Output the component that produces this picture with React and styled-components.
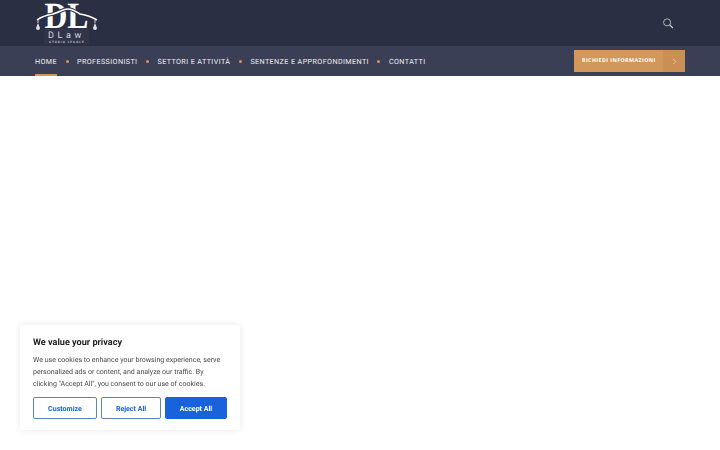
import React from "react";
import styled, { createGlobalStyle } from "styled-components";

const Global = createGlobalStyle`
  html, body { margin: 0; padding: 0; background: #fff; height: 100%; overflow: hidden; }
  body { font-family: Roboto, "Liberation Sans", sans-serif; text-rendering: geometricPrecision; }
`;
const Top = styled.header`
  height: 46px; background: #2b2f44; display: flex; align-items: flex-start;
  justify-content: space-between; padding: 0 47px 0 35px;
`;
const Logo = styled.a`
  display: block; width: 64px; height: 46px; color: #fff;
`;
const LogoArt = styled.svg`display: block; width: 64px; height: 46px;`;
const SearchBtn = styled.button`
  margin-top: 17px; width: 10.5px; height: 11px; padding: 0; border: 0; background: none; color: #d5d7de; display: block;
`;
const Nav = styled.nav`
  height: 30px; background: #3a3f55; display: flex; align-items: stretch;
  justify-content: space-between; padding: 0 35px;
`;
const Menu = styled.ul`
  list-style: none; margin: 0; padding: 0; display: flex; align-items: stretch;
`;
const Item = styled.li`
  display: flex; align-items: center;
  & + &::before {
    content: ""; width: 3px; height: 3px; border-radius: 50%; background: #d2975a; margin: 0 8.5px;
  }
`;
const MenuLink = styled.a`
  position: relative; height: 30px; line-height: 31px; font-size: 7.2px; font-weight: 400; letter-spacing: 0.39px;
  color: #eef0f4; white-space: nowrap; display: block;
  ${p => p.$active && `
    &::after { content: ""; position: absolute; left: 0; right: 0; bottom: 0; height: 2px; background: #d2975a; }
  `}
`;
const Cta = styled.a`
  align-self: center; display: flex; width: 111px; height: 22px; background: #d2975a; color: #fff;
`;
const CtaLabel = styled.span`
  flex: 1; padding-left: 8px; font: 700 5.3px/21px "Open Sans", Roboto, sans-serif; letter-spacing: 0.42px; white-space: nowrap;
`;
const CtaArrow = styled.span`
  width: 22px; background: #c98f54; display: flex; align-items: center; justify-content: center;
`;
const Consent = styled.section`
  position: fixed; left: 20px; top: 325px; width: 220px; height: 105px; box-sizing: border-box;
  padding: 11.5px 13px 0; background: #fff; border-radius: 3px; box-shadow: 0 0 7px rgba(0,0,0,.1);
`;
const Title = styled.h2`
  margin: 0 0 5.5px; font-size: 9.1px; line-height: 12px; font-weight: 700; color: #212121;
`;
const Body = styled.p`
  margin: 0 0 7px; font-size: 7.05px; line-height: 12px; color: #4a4a4a; white-space: nowrap;
`;
const Buttons = styled.div`display: grid; grid-template-columns: 64px 60px 62px; gap: 4px;`;
const Btn = styled.button`
  height: 22px; box-sizing: border-box; padding: 0; border-radius: 2px; font: 700 7.05px Roboto, sans-serif;
  text-rendering: geometricPrecision;
  border: 1px solid #1863dc; color: ${p => (p.$primary ? "#fff" : "#1863dc")}; background: ${p => (p.$primary ? "#1863dc" : "#fff")};
  ${p => !p.$primary && "border-color: #5f84ad;"}
`;

export default function App() {
  return (
    <>
      <Global />
      <Top>
        <Logo aria-label="DLaw">
          <LogoArt viewBox="0 0 64 46">
            <text x="9.5" y="28" fontFamily="Liberation Serif" fontWeight="700" fontSize="37" fill="#fff" textLength="44" lengthAdjust="spacingAndGlyphs">DL</text>
            <path d="M2 21 C6 17 12 15 18 14 C25 12 28 9 33 9 C38 9 41 12 45 14 C51 15 57 17 62 21" fill="none" stroke="#2b2f44" strokeWidth="3.6" />
            <path d="M2 20 C6 17 12 15 18 14 C25 12 28 9 33 9 C38 9 41 12 45 14 C51 15 57 17 62 20" fill="none" stroke="#fff" strokeWidth="1.5" />
            <path d="M3 20v3M60 20v3" stroke="#fff" strokeWidth=".8" />
            <path d="M1 28l2-5 2 5a2 2 0 0 1-4 0zM58 28l2-5 2 5a2 2 0 0 1-4 0z" fill="#dfe0e5" />
            <rect x="9" y="29" width="45" height="15" fill="#34384c" opacity=".75" />
            <text x="13" y="38" fontFamily="Roboto" fontSize="9" fill="#d8dae0" letterSpacing="3.6">DLaw</text>
            <text x="14" y="43" fontFamily="Roboto" fontWeight="700" fontSize="3" fill="#c9cbd3" letterSpacing="1.05">STUDIO LEGALE</text>
          </LogoArt>
        </Logo>
        <SearchBtn aria-label="Cerca">
          <svg width="10.5" height="11" viewBox="0 0 11 11" fill="none" stroke="currentColor">
            <circle cx="4.3" cy="4.3" r="3.7" strokeWidth=".8" />
            <path d="M7 7L10.4 10.4" strokeWidth="1.3" />
          </svg>
        </SearchBtn>
      </Top>
      <Nav>
        <Menu>
          <Item><MenuLink $active>HOME</MenuLink></Item>
          <Item><MenuLink>PROFESSIONISTI</MenuLink></Item>
          <Item><MenuLink>SETTORI E ATTIVITÀ</MenuLink></Item>
          <Item><MenuLink>SENTENZE E APPROFONDIMENTI</MenuLink></Item>
          <Item><MenuLink>CONTATTI</MenuLink></Item>
        </Menu>
        <Cta>
          <CtaLabel>RICHIEDI INFORMAZIONI</CtaLabel>
          <CtaArrow>
            <svg width="5" height="7" viewBox="0 0 6 8" fill="none" stroke="#f4e3cf" strokeWidth=".8"><path d="M1.5 1l3 3-3 3" /></svg>
          </CtaArrow>
        </Cta>
      </Nav>
      <Consent>
        <Title>We value your privacy</Title>
        <Body>
          We use cookies to enhance your browsing experience, serve<br />
          personalized ads or content, and analyze our traffic. By<br />
          clicking "Accept All", you consent to our use of cookies.
        </Body>
        <Buttons>
          <Btn>Customize</Btn>
          <Btn>Reject All</Btn>
          <Btn $primary>Accept All</Btn>
        </Buttons>
      </Consent>
    </>
  );
}
